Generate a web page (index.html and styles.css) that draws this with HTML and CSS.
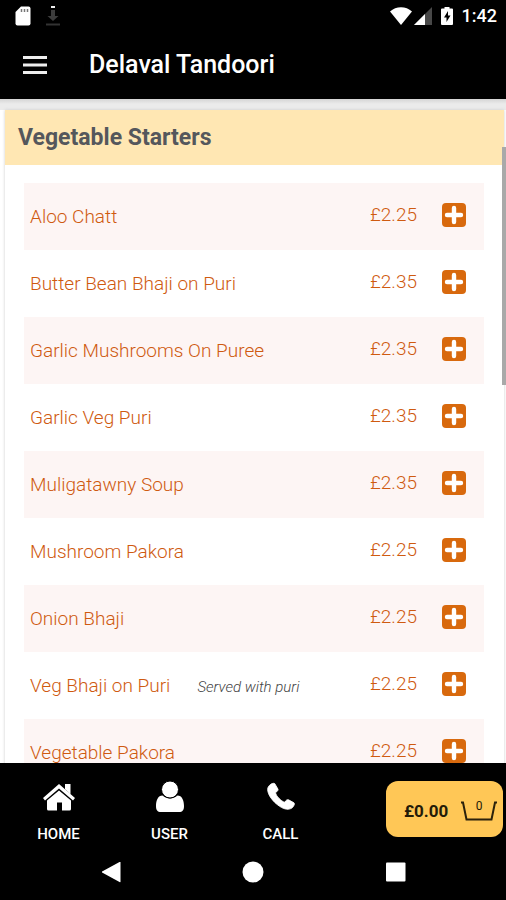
FILE: index.html
```html
<!DOCTYPE html>
<html lang="en">
<head>
<meta charset="utf-8">
<meta name="viewport" content="width=device-width, initial-scale=1">
<title>Delaval Tandoori</title>
<link rel="stylesheet" href="styles.css">
</head>
<body>
<svg width="0" height="0" class="sprite" aria-hidden="true">
  <symbol id="plus" viewBox="0 0 24 24">
    <rect width="24" height="24" rx="4" fill="#d8690d"/>
    <path d="M12 5v14M5 12h14" stroke="#fff" stroke-width="4.400" stroke-linecap="round"/>
  </symbol>
</svg>
<div class="app">
  <div class="status">
    <svg class="sd" viewBox="0 0 16 20" aria-hidden="true"><path d="M6 .5h7.500a2 2 0 0 1 2 2v15a2 2 0 0 1-2 2h-11a2 2 0 0 1-2-2V6z" fill="#fff"/><path d="M6.500 3v3M9.500 3v3M12.500 3v3" stroke="#777" stroke-width="1.500"/></svg>
    <svg class="download" viewBox="0 0 14 20" aria-hidden="true"><path d="M5 4h4v6h3.500L7 15 1.500 10H5z" fill="#3c3c3c"/><path d="M5 1h4" stroke="#eee" stroke-width="2"/><path d="M0 18.500h14" stroke="#333" stroke-width="2"/></svg>
    <span class="spring"></span>
    <svg class="wifi" viewBox="0 0 22 18" aria-hidden="true"><path d="M0 4.500C6-1.200 16-1.200 22 4.500L11 18z" fill="#fff"/></svg>
    <svg class="signal" viewBox="0 0 18 18" aria-hidden="true"><path d="M18 0v18H0z" fill="#484848"/><path d="M11 7v11H0z" fill="#fff"/></svg>
    <svg class="battery" viewBox="0 0 12 18" aria-hidden="true"><path d="M3.500 0h5v1.500H11a1 1 0 0 1 1 1V17a1 1 0 0 1-1 1H1a1 1 0 0 1-1-1V2.500a1 1 0 0 1 1-1h2.500z" fill="#fff"/><path d="M7 4 3 10.500h2.500V15L9.500 8.500H7z" fill="#000"/></svg>
    <time class="clock">1:42</time>
  </div>
  <header class="bar">
    <button class="menu" aria-label="Menu"><svg viewBox="0 0 24 18" aria-hidden="true"><path d="M0 1.500h24M0 9h24M0 16.500h24" stroke="#eee" stroke-width="3"/></svg></button>
    <h1>Delaval Tandoori</h1>
  </header>
  <main class="content">
    <section class="card">
      <h2>Vegetable Starters</h2>
      <ul class="items">
        <li><span class="name">Aloo Chatt</span><span class="price">£2.25</span><button aria-label="Add Aloo Chatt"><svg><use href="#plus"/></svg></button></li>
        <li><span class="name">Butter Bean Bhaji on Puri</span><span class="price">£2.35</span><button aria-label="Add Butter Bean Bhaji on Puri"><svg><use href="#plus"/></svg></button></li>
        <li><span class="name">Garlic Mushrooms On Puree</span><span class="price">£2.35</span><button aria-label="Add Garlic Mushrooms On Puree"><svg><use href="#plus"/></svg></button></li>
        <li><span class="name">Garlic Veg Puri</span><span class="price">£2.35</span><button aria-label="Add Garlic Veg Puri"><svg><use href="#plus"/></svg></button></li>
        <li><span class="name">Muligatawny Soup</span><span class="price">£2.35</span><button aria-label="Add Muligatawny Soup"><svg><use href="#plus"/></svg></button></li>
        <li><span class="name">Mushroom Pakora</span><span class="price">£2.25</span><button aria-label="Add Mushroom Pakora"><svg><use href="#plus"/></svg></button></li>
        <li><span class="name">Onion Bhaji</span><span class="price">£2.25</span><button aria-label="Add Onion Bhaji"><svg><use href="#plus"/></svg></button></li>
        <li><span class="name">Veg Bhaji on Puri<em>Served with puri</em></span><span class="price">£2.25</span><button aria-label="Add Veg Bhaji on Puri"><svg><use href="#plus"/></svg></button></li>
        <li><span class="name">Vegetable Pakora</span><span class="price">£2.25</span><button aria-label="Add Vegetable Pakora"><svg><use href="#plus"/></svg></button></li>
      </ul>
    </section>
    <div class="thumb"></div>
  </main>
  <footer class="dock">
    <nav class="tabs">
      <a href="#home"><svg viewBox="0 0 32 32" aria-hidden="true"><path d="M22 3h5.500v10L22 8zM16 3 32 17l-2 2.500L16 7.500 2 19.500 0 17z" fill="#fff"/><path d="M16 9.500 28 19.500V28a1.500 1.500 0 0 1-1.500 1.500h-7.500v-8h-5v8H5.500A1.500 1.500 0 0 1 4 28v-8.500z" fill="#fff"/></svg>HOME</a>
      <a href="#user"><svg viewBox="0 0 32 32" aria-hidden="true"><path d="M8.500 14.500c4.500 4 10.500 4 15 0 4.500 0 6.500 5 6.500 10.500 0 4-1.500 6-5 6H7c-3.500 0-5-2-5-6 0-5.500 2-10.500 6.500-10.500z" fill="#fff"/><circle cx="16" cy="8.500" r="8.500" fill="#fff" stroke="#000"/></svg>USER</a>
      <a href="#call"><svg viewBox="-2 -2 36 36" aria-hidden="true"><path d="M3 3C5 1 7.500 0 9 1l3.500 6c.7 1.300-.5 2.500-2.700 4.200C10.500 15 16 20.500 20 22c1.500-2.200 3-3.500 4.500-2.800l6 3.300c1.500 1-.5 4.500-2 5.700-3.500 2.500-8.500 2-14-1.700C7 21.500 1 13.500 1 7.500 1 5.500 2 4 3 3z" fill="#fff" stroke="#fff"/></svg>CALL</a>
    </nav>
    <button class="cart" aria-label="Basket, £0.00, 0 items">
      <span>£0.00</span>
      <span class="basket"><svg viewBox="0 0 36 20" aria-hidden="true"><path d="M0 1.500h2L5.500 18.500H30.500L34 1.500h2" fill="none" stroke="#2b210b" stroke-width="2"/></svg><span class="count">0</span></span>
    </button>
  </footer>
  <nav class="system">
    <button aria-label="Back"><svg viewBox="0 0 22 22" aria-hidden="true"><path d="M20.500 1v20a1 1 0 0 1-1 0L3 12a1 1 0 0 1 0-2L19.500 1z" fill="#fff"/></svg></button>
    <button aria-label="Home screen"><svg viewBox="0 0 22 22" aria-hidden="true"><circle cx="11" cy="11" r="10.500" fill="#fff"/></svg></button>
    <button aria-label="Recent apps"><svg viewBox="0 0 22 22" aria-hidden="true"><rect x="2" y="1.500" width="19.500" height="19" rx="1" fill="#fff"/></svg></button>
  </nav>
</div>
</body>
</html>
```
FILE: styles.css
```css
* { box-sizing: border-box; }
body { margin: 0; font-family: Roboto, "Liberation Sans", sans-serif; background: #000; }
button { border: 0; padding: 0; background: none; font: inherit; color: inherit; }
svg { display: block; }
h1, h2, ul { margin: 0; padding: 0; }
.sprite { position: absolute; }

.app { display: flex; flex-direction: column; height: 100vh; overflow: hidden; }

.status { display: flex; align-items: center; height: 31px; padding: 0 9px 0 15px; color: #fff; }
.sd { width: 16px; height: 20px; }
.download { width: 14px; height: 20px; margin-left: 15px; }
.spring { flex: 1; }
.wifi { width: 22px; height: 18px; margin-right: 2px; }
.signal { width: 18px; height: 18px; margin-right: 9px; }
.battery { width: 12px; height: 18px; margin-right: 9px; }
.clock { font-size: 18px; font-weight: 500; }

.bar { display: flex; align-items: center; gap: 42px; height: 68px; padding: 0 23px; color: #fff; }
.menu svg { width: 24px; height: 18px; }
h1 { font-size: 25px; font-weight: 500; line-height: 32px; }

.content { position: relative; flex: 1; min-height: 0; overflow: hidden; padding: 11px 2px 0 5px; background: linear-gradient(#d5d5d5, #ebebeb 5px, #ebebeb 11px, #fff 11px); }
.card { background: #fff; box-shadow: 0 0 3px #ccc; }
h2 { padding: 0 13px; font-size: 23px; font-weight: 700; line-height: 55px; color: #55575c; background: #ffe7b3; }
.items { list-style: none; padding: 18px 20px 0 19px; }
.items li { display: flex; align-items: center; height: 67px; padding: 0 18px 0 6px; color: #cf5a10; font-size: 19px; font-weight: 300; }
.items li:nth-child(odd) { background: #fdf5f4; }
.name { flex: 1; }
.name em { margin-left: 27px; font-size: 15px; color: #444; }
.price { padding-bottom: 5px; margin-right: 25px; }
.items button { padding-bottom: 4px; }
.items svg { width: 24px; height: 24px; }
.thumb { position: absolute; top: 48px; right: 0; width: 4px; height: 238px; background: #a9a9a9; }

.dock { display: flex; align-items: flex-start; justify-content: space-between; height: 80px; padding: 18px 3px 0; }
.tabs { display: flex; flex: 0 1 333px; }
.tabs a { display: flex; flex: 1; flex-direction: column; align-items: center; gap: 11px; color: #fff; font-size: 15px; font-weight: 500; line-height: 20px; text-decoration: none; }
.tabs svg { width: 32px; height: 32px; }
.cart { display: flex; align-items: center; justify-content: space-between; width: 117px; height: 56px; padding: 4px 6px 0 18px; border-radius: 12px; background: #ffc756; color: #241b08; font-size: 17px; font-weight: 700; }
.basket { position: relative; }
.basket svg { width: 36px; height: 20px; }
.count { position: absolute; inset: 0; font-size: 12px; font-weight: 400; line-height: 10px; text-align: center; }

.system { display: flex; height: 57px; padding: 0 40px; }
.system button { display: flex; flex: 1; align-items: center; justify-content: center; }
.system svg { width: 22px; height: 22px; }
```
